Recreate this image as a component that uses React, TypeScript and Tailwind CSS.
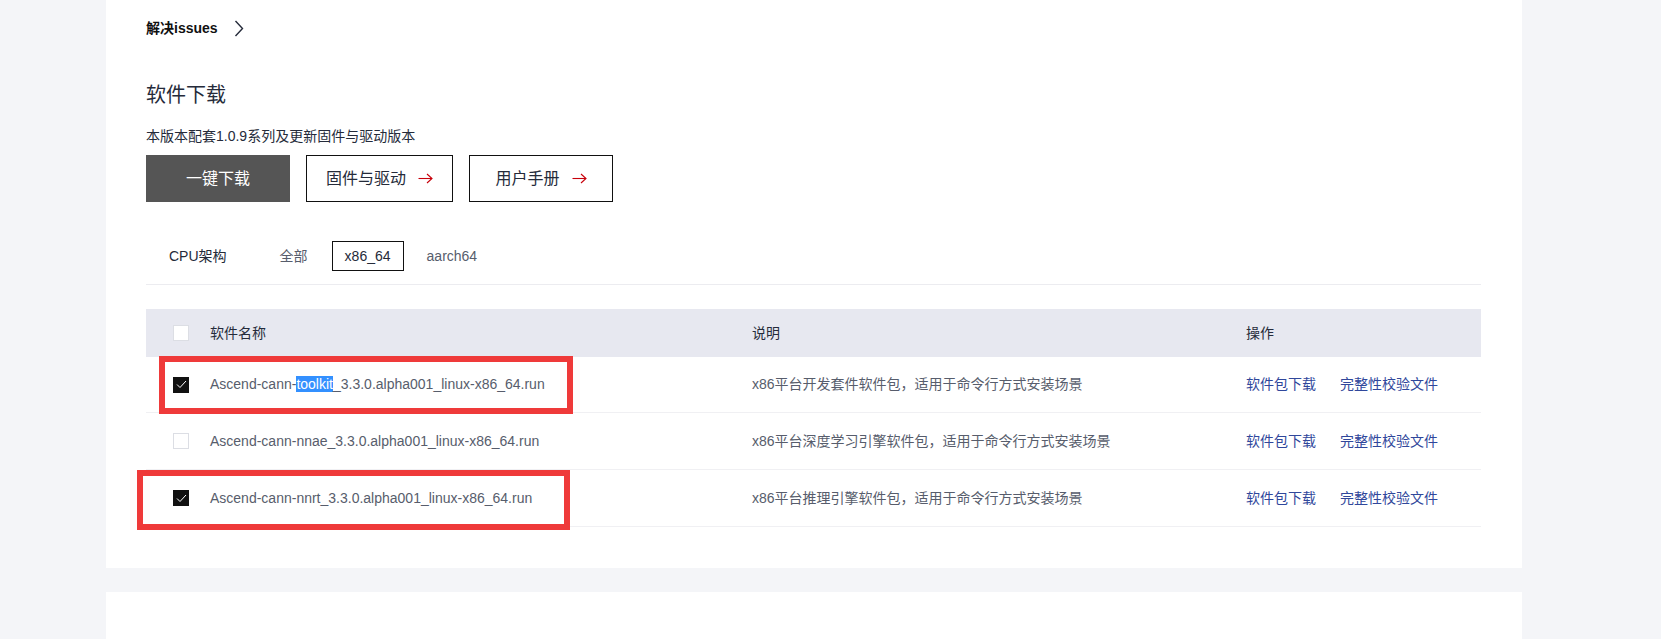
import React from "react";

function Checkbox({ checked }: { checked: boolean }) {
  if (checked) {
    return (
      <span className="flex h-[16px] w-[16px] items-center justify-center bg-[#111111]">
        <svg width="11" height="9" viewBox="0 0 11 9" fill="none">
          <polyline points="1,4.5 4,7.5 10,1" stroke="#ffffff" strokeWidth="1" />
        </svg>
      </span>
    );
  }
  return <span className="block h-[16px] w-[16px] border border-[#dcdee4] bg-white" />;
}

function Arrow() {
  return (
    <svg width="15" height="11" viewBox="0 0 15 11" fill="none">
      <line x1="0.5" y1="5.5" x2="14" y2="5.5" stroke="#c7000b" strokeWidth="1.1" />
      <polyline points="9,1 14,5.5 9,10" stroke="#c7000b" strokeWidth="1.1" />
    </svg>
  );
}

const rows = [
  {
    name: (
      <>
        Ascend-cann-<span className="bg-[#3390ff] text-white">toolkit</span>_3.3.0.alpha001_linux-x86_64.run
      </>
    ),
    desc: "x86平台开发套件软件包，适用于命令行方式安装场景",
    checked: true,
    box: 1,
    h: "h-[56px]",
  },
  {
    name: <>Ascend-cann-nnae_3.3.0.alpha001_linux-x86_64.run</>,
    desc: "x86平台深度学习引擎软件包，适用于命令行方式安装场景",
    checked: false,
    box: 0,
    h: "h-[57px]",
  },
  {
    name: <>Ascend-cann-nnrt_3.3.0.alpha001_linux-x86_64.run</>,
    desc: "x86平台推理引擎软件包，适用于命令行方式安装场景",
    checked: true,
    box: 2,
    h: "h-[57px]",
  },
];

export default function App() {
  return (
    <div className="min-h-[639px] w-full bg-[#f4f5f8] font-['Liberation_Sans','Noto_Sans_CJK_SC',sans-serif] text-[#252b3a]">
      <div className="ml-[106px] w-[1416px] bg-white pl-[40px] pr-[41px] pt-[18px] pb-[41px]">
        <div className="flex h-[20px] items-center text-[14px] font-bold leading-[20px] text-[#111]">
          <span>解决issues</span>
          <svg className="ml-[16px]" width="10" height="17" viewBox="0 0 10 17" fill="none">
            <polyline points="1.5,1 8.5,8.5 1.5,16" stroke="#252b3a" strokeWidth="1.4" />
          </svg>
        </div>

        <h2 className="mt-[43px] text-[20px] leading-[28px] font-normal text-[#252b3a]">软件下载</h2>
        <p className="mt-[17px] text-[14px] leading-[20px] text-[#252b3a]">本版本配套1.0.9系列及更新固件与驱动版本</p>

        <div className="mt-[9px] flex gap-[16px]">
          <div className="flex h-[47px] w-[144px] items-center justify-center bg-[#555555] text-[16px] text-white">一键下载</div>
          <div className="flex h-[47px] w-[147px] items-center justify-center gap-[12px] border border-[#111] text-[16px] text-[#252b3a]">
            <span>固件与驱动</span>
            <Arrow />
          </div>
          <div className="flex h-[47px] w-[144px] items-center justify-center gap-[12px] border border-[#111] text-[16px] text-[#252b3a]">
            <span>用户手册</span>
            <Arrow />
          </div>
        </div>

        <div className="mt-[39px] flex items-center border-b border-[#ececf0] pb-[13px] pl-[23px] text-[14px]">
          <span className="text-[#252b3a]">CPU架构</span>
          <span className="ml-[53px] text-[#575d6c]">全部</span>
          <span className="ml-[24px] flex h-[30px] w-[72px] items-center justify-center border border-[#111] text-[#252b3a]">x86_64</span>
          <span className="ml-[23px] text-[#575d6c]">aarch64</span>
        </div>

        <div className="mt-[24px] text-[14px]">
          <div className="flex h-[48px] items-center bg-[#e7e8f0] text-[#252b3a]">
            <div className="w-[64px] pl-[27px]">
              <Checkbox checked={false} />
            </div>
            <div className="w-[542px]">软件名称</div>
            <div className="w-[494px]">说明</div>
            <div>操作</div>
          </div>
          {rows.map((r, i) => (
            <div key={i} className={`relative flex ${r.h} items-center border-b border-[#f0f0f3] text-[#575d6c]`}>
              <div className="w-[64px] pl-[27px]">
                <Checkbox checked={r.checked} />
              </div>
              <div className="w-[542px] whitespace-nowrap">{r.name}</div>
              <div className="w-[494px] whitespace-nowrap">{r.desc}</div>
              <div className="flex gap-[24px] whitespace-nowrap text-[#30479b]">
                <span>软件包下载</span>
                <span>完整性校验文件</span>
              </div>
              {r.box === 1 && (
                <div className="pointer-events-none absolute left-[13px] top-[-1px] h-[58px] w-[414px] border-[6px] border-[#ef3a3a]" />
              )}
              {r.box === 2 && (
                <div className="pointer-events-none absolute left-[-9px] top-[0px] h-[60px] w-[433px] border-[6px] border-[#ef3a3a]" />
              )}
            </div>
          ))}
        </div>
      </div>
      <div className="mt-[24px] ml-[106px] h-[60px] w-[1416px] bg-white" />
    </div>
  );
}
